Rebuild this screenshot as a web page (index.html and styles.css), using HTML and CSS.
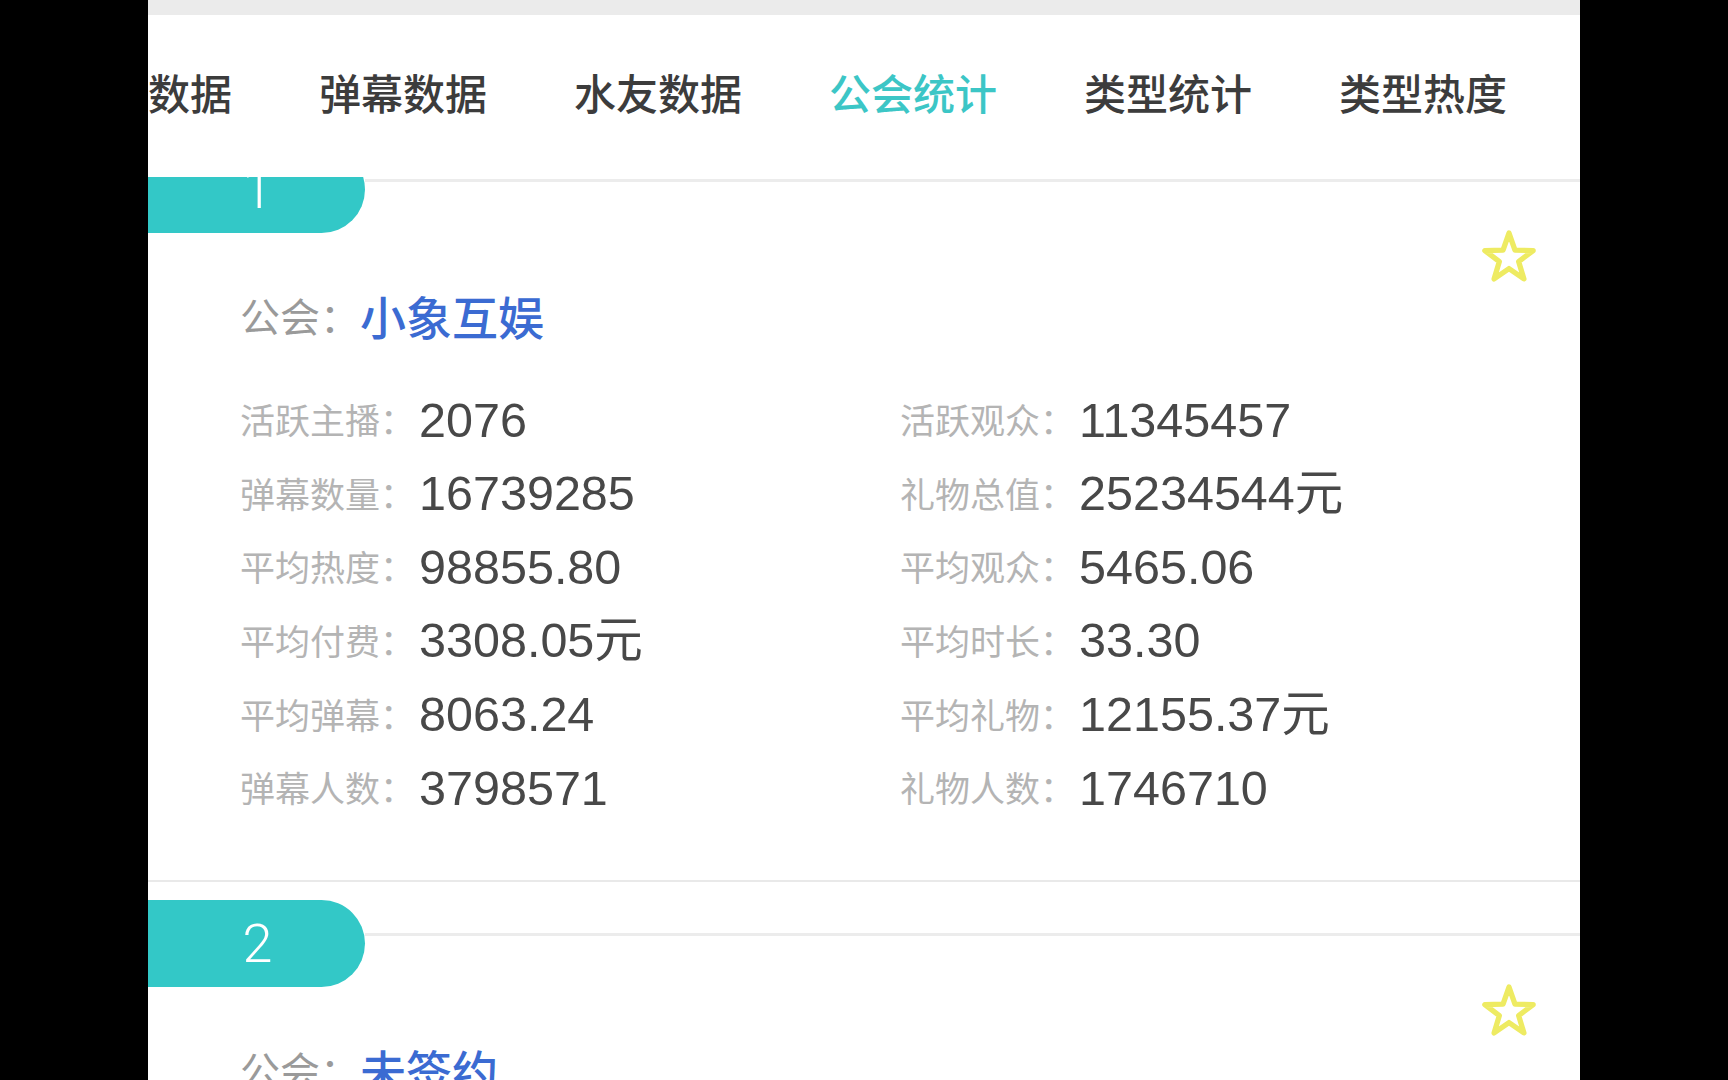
FILE: index.html
```html
<!DOCTYPE html>
<html lang="zh-CN">
<head>
<meta charset="utf-8">
<title>公会统计</title>
<link rel="stylesheet" href="styles.css">
</head>
<body>
<div class="screen">
  <div class="status"></div>
  <nav class="tabs">
    <div class="tab-track">
      <span class="tab">礼物数据</span>
      <span class="tab">弹幕数据</span>
      <span class="tab">水友数据</span>
      <span class="tab active">公会统计</span>
      <span class="tab">类型统计</span>
      <span class="tab">类型热度</span>
    </div>
  </nav>
  <main class="list">
    <div class="list-track">
      <section class="card">
        <div class="card-head">
          <div class="rank">1</div>
          <div class="rule"></div>
        </div>
        <div class="fav-row">
          <svg class="star" viewBox="0 0 24 24"><polygon points="12,2.5 14.47,9.6 21.99,9.76 15.99,14.3 18.17,21.49 12,17.2 5.83,21.49 8.01,14.3 2.01,9.76 9.53,9.6"/></svg>
        </div>
        <div class="guild"><span class="guild-label">公会：</span><span class="guild-name">小象互娱</span></div>
        <div class="stats">
          <div class="stat"><span class="k">活跃主播：</span><span class="v">2076</span></div>
          <div class="stat"><span class="k">活跃观众：</span><span class="v">11345457</span></div>
          <div class="stat"><span class="k">弹幕数量：</span><span class="v">16739285</span></div>
          <div class="stat"><span class="k">礼物总值：</span><span class="v">25234544元</span></div>
          <div class="stat"><span class="k">平均热度：</span><span class="v">98855.80</span></div>
          <div class="stat"><span class="k">平均观众：</span><span class="v">5465.06</span></div>
          <div class="stat"><span class="k">平均付费：</span><span class="v">3308.05元</span></div>
          <div class="stat"><span class="k">平均时长：</span><span class="v">33.30</span></div>
          <div class="stat"><span class="k">平均弹幕：</span><span class="v">8063.24</span></div>
          <div class="stat"><span class="k">平均礼物：</span><span class="v">12155.37元</span></div>
          <div class="stat"><span class="k">弹幕人数：</span><span class="v">3798571</span></div>
          <div class="stat"><span class="k">礼物人数：</span><span class="v">1746710</span></div>
        </div>
      </section>
      <section class="card">
        <div class="card-head">
          <div class="rank">2</div>
          <div class="rule"></div>
        </div>
        <div class="fav-row">
          <svg class="star" viewBox="0 0 24 24"><polygon points="12,2.5 14.47,9.6 21.99,9.76 15.99,14.3 18.17,21.49 12,17.2 5.83,21.49 8.01,14.3 2.01,9.76 9.53,9.6"/></svg>
        </div>
        <div class="guild"><span class="guild-label">公会：</span><span class="guild-name">未签约</span></div>
      </section>
    </div>
  </main>
</div>
</body>
</html>
```

FILE: styles.css
```css
* {
  box-sizing: border-box;
}

html, body {
  margin: 0;
  padding: 0;
  background: #000;
  height: 100%;
  overflow: hidden;
}

.screen {
  width: 1432px;
  height: 1080px;
  margin: 0 auto;
  background: #fff;
  display: flex;
  flex-direction: column;
  overflow: hidden;
  font-family: "Noto Sans CJK SC", sans-serif;
}

.status {
  height: 15px;
  flex: none;
  background: #ebebeb;
}

.tabs {
  height: 162px;
  flex: none;
  display: flex;
  align-items: center;
  padding-bottom: 8px;
  overflow: hidden;
  background: #fff;
  position: relative;
  z-index: 2;
}

.tab-track {
  display: flex;
  gap: 87px;
  margin-left: -84px;
  white-space: nowrap;
}

.tab {
  font-size: 42px;
  line-height: 1;
  font-weight: 500;
  color: #3c3c3c;
}

.tab.active {
  color: #3cc6c6;
}

.list {
  flex: 1;
  overflow: hidden;
}

.list-track {
  margin-top: -49px;
}

.card {
  padding-top: 18px;
  padding-bottom: 55px;
  border-bottom: 2px solid #e9e9e9;
}

.card-head {
  display: flex;
  align-items: flex-start;
}

.rank {
  width: 217px;
  height: 87px;
  flex: none;
  background: #33c8c7;
  border-radius: 0 44px 44px 0;
  color: #fff;
  font-family: "Roboto", "Liberation Sans", sans-serif;
  font-weight: 300;
  font-size: 54px;
  display: flex;
  align-items: center;
  justify-content: center;
  padding-left: 2px;
}

.rule {
  flex: 1;
  height: 3px;
  margin-top: 33px;
  background: #ececec;
}

.fav-row {
  display: flex;
  justify-content: flex-end;
  padding-right: 42px;
  margin-top: -6px;
  height: 58px;
}

.star {
  width: 58px;
  height: 58px;
  fill: none;
  stroke: #eeeb62;
  stroke-width: 2.2;
  stroke-linejoin: round;
}

.guild {
  display: flex;
  align-items: center;
  height: 56px;
  margin-top: 2px;
  padding-left: 92px;
}

.guild-label {
  font-size: 40px;
  line-height: 1;
  color: #9a9a9a;
}

.guild-name {
  font-size: 46px;
  line-height: 1;
  font-weight: 500;
  color: #3b6bd2;
}

.stats {
  display: grid;
  grid-template-columns: 660px 1fr;
  grid-auto-rows: 73.6px;
  margin-top: 40px;
  padding-left: 92px;
}

.stat {
  display: flex;
  align-items: center;
}

.k {
  font-size: 35px;
  line-height: 1;
  color: #b4b4b4;
  margin-right: 4px;
  position: relative;
  top: -1px;
}

.v {
  font-family: "Liberation Sans", "Noto Sans CJK SC", sans-serif;
  font-size: 48.5px;
  line-height: 1;
  color: #484848;
}
```
